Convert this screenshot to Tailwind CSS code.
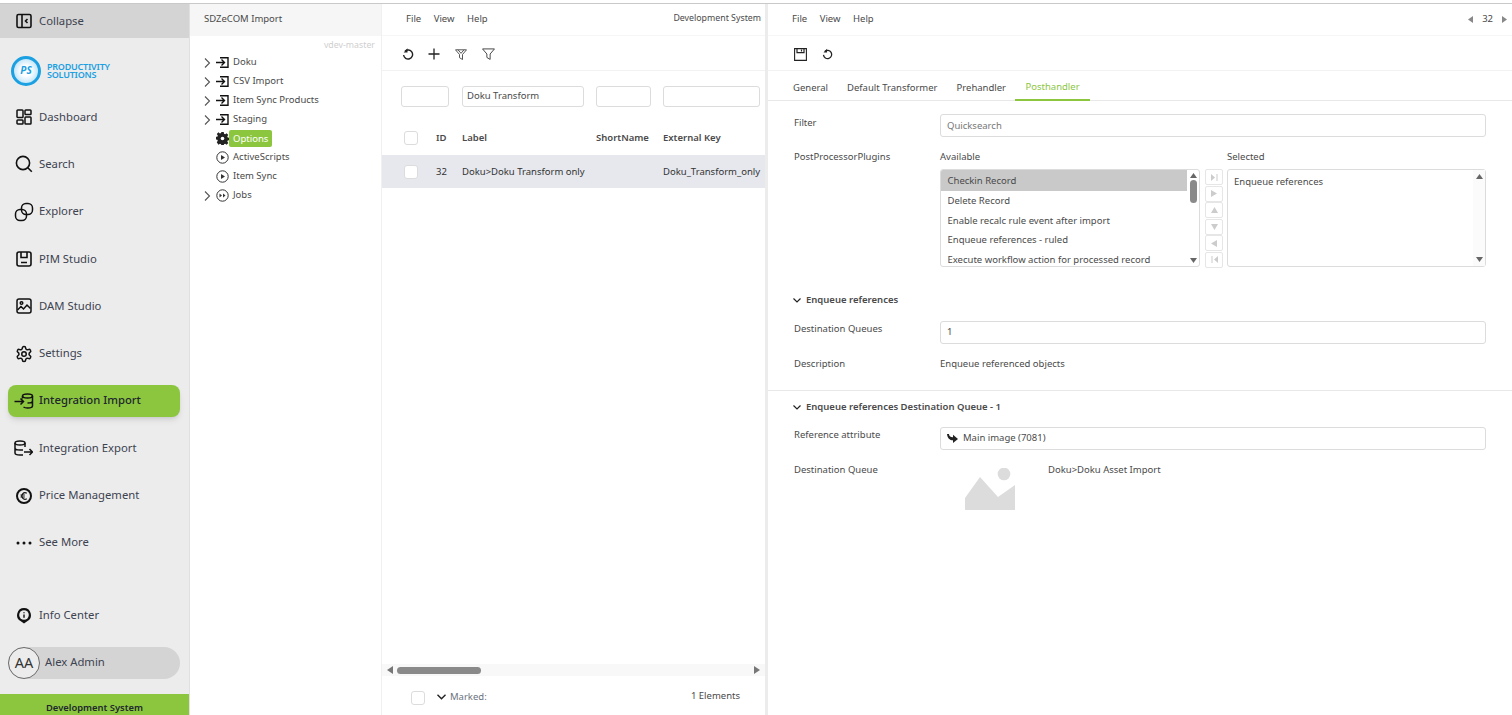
<!DOCTYPE html>
<html><head><meta charset="utf-8"><script src="https://cdn.jsdelivr.net/npm/@tailwindcss/browser@4"></script></head>
<body class="m-0 bg-white">
<div class="w-[1512px] h-[715px] overflow-hidden flex flex-col font-['Noto_Sans','Open_Sans',sans-serif] text-[#4a4a4a]">
<div class="h-[3px] bg-white shrink-0"></div>
<div class="h-px bg-[#c9c9c9] shrink-0"></div>
<div class="flex flex-1 min-h-0">

<!-- Sidebar -->
<aside class="w-[189px] shrink-0 bg-[#ececec] flex flex-col text-[11.3px] text-[#3d4350]">
  <div class="h-[34px] bg-[#d4d4d4] flex items-center pl-[16px] gap-[7px] shrink-0">
    <svg class="w-[16px] h-[16px]" viewBox="0 0 16 16" fill="none" stroke="#111" stroke-width="1.6"><rect x="1" y="1.5" width="14" height="13" rx="1.5"/><path d="M6 1.5v13M11.5 6l-2 2 2 2"/></svg>
    <span>Collapse</span>
  </div>
  <div class="h-[55.5px] flex items-center pl-[11px] pt-[10px] gap-[6px] shrink-0">
    <div class="w-[30px] h-[30px] rounded-full bg-[radial-gradient(circle,#ffffff_30%,#bfe4f8_75%)] border-[3px] border-[#1ba0e2] flex items-center justify-center text-[10px] italic font-bold text-[#1ba0e2]">PS</div>
    <div class="text-[#1ba0e2] text-[9px] font-semibold leading-[8px] tracking-tight"><div>PRODUCTIVITY</div><div>SOLUTIONS</div></div>
  </div>
  <div class="flex flex-col">
    <div class="h-[47.3px] flex items-center pl-[16px] gap-[7px]"><svg class="w-[16px] h-[16px]" viewBox="0 0 16 16" fill="none" stroke="#111" stroke-width="1.5"><rect x="1" y="1" width="6" height="7.5" rx=".8"/><rect x="9" y="1" width="6" height="4.5" rx=".8"/><rect x="1" y="11" width="6" height="4" rx=".8"/><rect x="9" y="8" width="6" height="7" rx=".8"/></svg><span>Dashboard</span></div>
    <div class="h-[47.3px] flex items-center pl-[16px] gap-[7px]"><svg class="w-[16px] h-[16px] overflow-visible" viewBox="0 0 16 16" fill="none" stroke="#111" stroke-width="1.6"><circle cx="7" cy="7" r="6.6"/><path d="M11.800 11.800l4 4"/></svg><span>Search</span></div>
    <div class="h-[47.3px] flex items-center pl-[16px] gap-[7px]"><svg class="w-[16px] h-[16px] overflow-visible" viewBox="0 0 16 16" fill="none" stroke="#111" stroke-width="1.5"><rect x="5.500" y="-.5" width="11" height="11" rx="4.500"/><rect x="-.5" y="5.500" width="11" height="11" rx="4.500"/></svg><span>Explorer</span></div>
    <div class="h-[47.3px] flex items-center pl-[16px] gap-[7px]"><svg class="w-[16px] h-[16px]" viewBox="0 0 16 16" fill="none" stroke="#111" stroke-width="1.6"><rect x="1" y="1" width="14" height="14" rx="2"/><path d="M5 1v5.500h6V1M5 11.500h6"/></svg><span>PIM Studio</span></div>
    <div class="h-[47.3px] flex items-center pl-[16px] gap-[7px]"><svg class="w-[16px] h-[16px]" viewBox="0 0 16 16" fill="none" stroke="#111" stroke-width="1.5"><rect x="1" y="1" width="14" height="14" rx="2"/><circle cx="5.500" cy="5" r="1.300"/><path d="M1.500 12l3.500-3.500 2.500 2.500 3.500-4 3.500 3.500"/></svg><span>DAM Studio</span></div>
    <div class="h-[47.3px] flex items-center pl-[15px] gap-[6px]"><svg class="w-[18px] h-[18px]" viewBox="0 0 24 24" fill="none" stroke="#111" stroke-width="2"><path d="M12.200 2h-.4a2 2 0 0 0-2 2v.2a2 2 0 0 1-1 1.700l-.4.3a2 2 0 0 1-2 0l-.2-.1a2 2 0 0 0-2.700.7l-.2.4a2 2 0 0 0 .7 2.700l.2.1a2 2 0 0 1 1 1.700v.5a2 2 0 0 1-1 1.800l-.2.1a2 2 0 0 0-.7 2.700l.2.4a2 2 0 0 0 2.700.7l.2-.1a2 2 0 0 1 2 0l.4.3a2 2 0 0 1 1 1.700v.2a2 2 0 0 0 2 2h.4a2 2 0 0 0 2-2v-.2a2 2 0 0 1 1-1.700l.4-.3a2 2 0 0 1 2 0l.2.1a2 2 0 0 0 2.700-.7l.2-.4a2 2 0 0 0-.7-2.700l-.2-.1a2 2 0 0 1-1-1.800v-.5a2 2 0 0 1 1-1.700l.2-.1a2 2 0 0 0 .7-2.700l-.2-.4a2 2 0 0 0-2.700-.7l-.2.1a2 2 0 0 1-2 0l-.4-.3a2 2 0 0 1-1-1.700V4a2 2 0 0 0-2-2z"/><circle cx="12" cy="12" r="3"/></svg><span>Settings</span></div>
    <div class="h-[47.3px] flex items-center pl-[8px] pr-[9px]"><div class="flex-1 h-[32px] bg-[#8cc63f] rounded-[8px] shadow-md flex items-center pl-[6px] gap-[5px] font-medium text-[#20262e]"><svg class="w-[20px] h-[16px]" viewBox="0 0 20 16" fill="none" stroke="#111" stroke-width="1.500"><ellipse cx="13.500" cy="3" rx="5" ry="2"/><path d="M8.500 3v2.500M18.500 3v10c0 1.200-2.200 2-5 2-1.500 0-3-.3-4-1M18.500 8c0 1.200-2.200 2-5 2M.5 8.500h9M6.500 5.500l3 3-3 3"/></svg><span>Integration Import</span></div></div>
    <div class="h-[47.3px] flex items-center pl-[14px] gap-[6px]"><svg class="w-[19px] h-[16px]" viewBox="0 0 19 16" fill="none" stroke="#111" stroke-width="1.500"><ellipse cx="6" cy="3" rx="5" ry="2"/><path d="M1 3v10c0 1.200 2.200 2 5 2h3M1 8c0 1.200 2.200 2 5 2h3M11 3v4M10 12h8.500M15.500 9l3 3-3 3"/></svg><span>Integration Export</span></div>
    <div class="h-[47.3px] flex items-center pl-[16px] gap-[7px]"><svg class="w-[16px] h-[16px]" viewBox="0 0 16 16" fill="none" stroke="#111"><circle cx="8" cy="8" r="7" stroke-width="2"/><path d="M10.800 5.300a3.200 3.200 0 1 0 0 5.400M4.500 7h4.300M4.500 9h4.300" stroke-width="1.200"/></svg><span>Price Management</span></div>
    <div class="h-[47.3px] flex items-center pl-[16px] gap-[7px]"><svg class="w-[16px] h-[16px]" viewBox="0 0 16 16" fill="#111"><circle cx="2" cy="8" r="1.500"/><circle cx="8" cy="8" r="1.500"/><circle cx="14" cy="8" r="1.500"/></svg><span>See More</span></div>
  </div>
  <div class="flex-1"></div>
  <div class="h-[47px] flex items-center pl-[16px] gap-[7px]"><svg class="w-[16px] h-[17px]" viewBox="0 0 16 17" fill="none"><path d="M8 1a7 7 0 0 1 3.500 13L8 16.500 4.500 14A7 7 0 0 1 8 1z" fill="#111"/><circle cx="8" cy="8" r="4.800" fill="#ececec"/><path d="M8 7.500v3.200M8 5.200v1" stroke="#111" stroke-width="1.400"/></svg><span>Info Center</span></div>
  <div class="h-[47px] flex items-center pl-[8px] pr-[9px]"><div class="flex-1 h-[32px] bg-[#d4d4d4] rounded-full flex items-center"><div class="w-[32px] h-[32px] rounded-full border border-[#6b6b6b] bg-[#ececec] flex items-center justify-center text-[14.5px] text-[#333]">AA</div><span class="ml-[5px]">Alex Admin</span></div></div>
  <div class="h-[21px] mt-[8px] bg-[#8cc63f] flex items-center justify-center pt-[7px] text-[9.4px] font-semibold text-[#20262e] shrink-0">Development System</div>
</aside>

<!-- Tree -->
<section class="w-[192px] shrink-0 flex flex-col text-[9.5px] text-[#4a4a4a] border-l border-[#e0e0e0]">
  <div class="h-[32px] bg-[#f6f6f6] flex items-center pl-[14px] pb-[2px] shrink-0">SDZeCOM Import</div>
  <div class="h-[17px] flex items-center justify-end pr-[6px] text-[8.8px] text-[#cfcfcf] pt-[3px]">vdev-master</div>
  <div class="flex flex-col">
    <div class="h-[19px] flex items-center pl-[14px]"><svg class="w-[7px] h-[10px] mr-[5px]" viewBox="0 0 7 10" fill="none" stroke="#555" stroke-width="1.100"><path d="M1 .5L5.500 5 1 9.500"/></svg><svg class="w-[13px] h-[11px] mr-[4px]" viewBox="0 0 13 11" fill="none" stroke="#111" stroke-width="1.400"><path d="M0 5.500h8M5.500 2.500l3 3-3 3M4 .7h8v9.600H4"/></svg><span>Doku</span></div>
    <div class="h-[19px] flex items-center pl-[14px]"><svg class="w-[7px] h-[10px] mr-[5px]" viewBox="0 0 7 10" fill="none" stroke="#555" stroke-width="1.100"><path d="M1 .5L5.500 5 1 9.500"/></svg><svg class="w-[13px] h-[11px] mr-[4px]" viewBox="0 0 13 11" fill="none" stroke="#111" stroke-width="1.400"><path d="M0 5.500h8M5.500 2.500l3 3-3 3M4 .7h8v9.600H4"/></svg><span>CSV Import</span></div>
    <div class="h-[19px] flex items-center pl-[14px]"><svg class="w-[7px] h-[10px] mr-[5px]" viewBox="0 0 7 10" fill="none" stroke="#555" stroke-width="1.100"><path d="M1 .5L5.500 5 1 9.500"/></svg><svg class="w-[13px] h-[11px] mr-[4px]" viewBox="0 0 13 11" fill="none" stroke="#111" stroke-width="1.400"><path d="M0 5.500h8M5.500 2.500l3 3-3 3M4 .7h8v9.600H4"/></svg><span>Item Sync Products</span></div>
    <div class="h-[19px] flex items-center pl-[14px]"><svg class="w-[7px] h-[10px] mr-[5px]" viewBox="0 0 7 10" fill="none" stroke="#555" stroke-width="1.100"><path d="M1 .5L5.500 5 1 9.500"/></svg><svg class="w-[13px] h-[11px] mr-[4px]" viewBox="0 0 13 11" fill="none" stroke="#111" stroke-width="1.400"><path d="M0 5.500h8M5.500 2.500l3 3-3 3M4 .7h8v9.600H4"/></svg><span>Staging</span></div>
    <div class="h-[19px] flex items-center pl-[26px]"><svg class="w-[13px] h-[13px]" viewBox="0 0 13 13" fill="#222"><path d="M5.200 0h2.600l.3 1.900 1.200.5 1.600-1.100 1.800 1.800-1.100 1.600.5 1.200 1.900.3v2.600l-1.900.3-.5 1.200 1.100 1.600-1.800 1.800-1.600-1.100-1.200.5-.3 1.900H5.200l-.3-1.900-1.200-.5-1.600 1.100L.3 11l1.100-1.600-.5-1.200L-1 7.900V5.300l1.900-.3.5-1.200L.3 2.200l1.800-1.800 1.600 1.100 1.200-.5z" transform="translate(.5 0) scale(.93)"/><circle cx="6.500" cy="6.500" r="1.800" fill="#fff"/></svg><span class="bg-[#8cc63f] text-white rounded-[2px] px-[4px] h-[17px] leading-[17px]">Options</span></div>
    <div class="h-[19px] flex items-center pl-[26px] gap-[4px]"><svg class="w-[13px] h-[13px]" viewBox="0 0 13 13" fill="none" stroke="#333"><circle cx="6.500" cy="6.500" r="5.700"/><path d="M5 4l4 2.500L5 9z" fill="#333" stroke="none"/></svg><span>ActiveScripts</span></div>
    <div class="h-[19px] flex items-center pl-[26px] gap-[4px]"><svg class="w-[13px] h-[13px]" viewBox="0 0 13 13" fill="none" stroke="#333"><circle cx="6.500" cy="6.500" r="5.700"/><path d="M5 4l4 2.500L5 9z" fill="#333" stroke="none"/></svg><span>Item Sync</span></div>
    <div class="h-[19px] flex items-center pl-[14px]"><svg class="w-[7px] h-[10px] mr-[5px]" viewBox="0 0 7 10" fill="none" stroke="#555" stroke-width="1.100"><path d="M1 .5L5.500 5 1 9.500"/></svg><svg class="w-[13px] h-[13px] mr-[4px]" viewBox="0 0 13 13" fill="none" stroke="#333"><circle cx="6.500" cy="6.500" r="5.700"/><path d="M3.500 4.500l2.500 2-2.500 2zM7 4.500l2.500 2-2.500 2z" fill="#333" stroke="none"/></svg><span>Jobs</span></div>
  </div>
</section>

<!-- List -->
<section class="w-[384px] shrink-0 flex flex-col text-[9.5px] border-l border-[#f0f0f0] relative">
  <div class="h-[32px] flex items-center pl-[24px] pr-[4px] pb-[1px] gap-[12.5px] border-b border-[#f6f6f6] shrink-0"><span>File</span><span>View</span><span>Help</span><span class="ml-auto text-[8.8px]">Development System</span></div>
  <div class="h-[35px] flex items-center pl-[20px] pt-[2px] border-b border-[#f2f2f2] shrink-0">
    <svg class="w-[12px] h-[12px]" viewBox="0 0 12 12" fill="none" stroke="#222" stroke-width="1.400"><path d="M3 3.200A4.500 4.500 0 1 1 1.600 7"/><path d="M5.500 .2v4.200H1.700" stroke="none" fill="#222"/></svg>
    <svg class="w-[12px] h-[12px] ml-[14px]" viewBox="0 0 12 12" fill="none" stroke="#222" stroke-width="1.300"><path d="M6 .5v11M.5 6h11"/></svg>
    <svg class="w-[12px] h-[11px] ml-[15px]" viewBox="0 0 12 11" fill="none" stroke="#444" stroke-width=".9"><path d="M.5 .8h11L7.500 5.500v5l-3-1.800V5.500zM3 .8l3 3.500 3-3.500"/></svg>
    <svg class="w-[13px] h-[12px] ml-[15px]" viewBox="0 0 12 11" fill="none" stroke="#444" stroke-width=".9"><path d="M.5 .8h11L7.500 5.500v5l-3-1.800V5.500z"/></svg>
  </div>
  <div class="h-[50px] flex items-center pl-[19px] shrink-0">
    <div class="w-[48px] h-[21px] border border-[#dcdcdc] rounded-[3px]"></div>
    <div class="w-[122px] h-[21px] ml-[13px] border border-[#dcdcdc] rounded-[3px] flex items-center pl-[4px] pt-[1px]">Doku Transform</div>
    <div class="w-[55px] h-[21px] ml-[12px] border border-[#dcdcdc] rounded-[3px]"></div>
    <div class="w-[97px] h-[21px] ml-[12px] border border-[#dcdcdc] rounded-[3px]"></div>
  </div>
  <div class="h-[33px] flex items-center pl-[22px] font-semibold text-[#4a4a4a] shrink-0 [&>span]:pt-[1px]">
    <div class="w-[14px] h-[14px] border border-[#dcdcdc] rounded-[3px] bg-white"></div>
    <span class="w-[26px] ml-[18px]">ID</span><span class="w-[134px]">Label</span><span class="w-[67px] whitespace-nowrap">ShortName</span><span>External Key</span>
  </div>
  <div class="h-[33px] mt-px bg-[#e6e8ed] flex items-center pl-[22px] text-[#333] shrink-0 [&>span]:pt-[1px]">
    <div class="w-[14px] h-[14px] border border-[#dcdcdc] rounded-[3px] bg-white"></div>
    <span class="w-[26px] ml-[18px]">32</span><span class="w-[201px]">Doku&gt;Doku Transform only</span><span>Doku_Transform_only</span>
  </div>
  <div class="flex-1"></div>
  <div class="h-[12px] bg-[#f8f8f8] flex items-center px-[5px] shrink-0 mb-[9px]">
    <svg class="w-[6px] h-[8px]" viewBox="0 0 6 8" fill="#777"><path d="M6 0v8L0 4z"/></svg>
    <div class="w-[84px] h-[7px] bg-[#8a8a8a] rounded-full ml-[4px]"></div>
    <svg class="w-[6px] h-[8px] ml-auto" viewBox="0 0 6 8" fill="#777"><path d="M0 0v8l6-4z"/></svg>
  </div>
  <div class="h-[23px] flex items-center pl-[29px] pr-[25px] shrink-0 mb-[7px]">
    <div class="w-[14px] h-[14px] mt-[2px] border border-[#dcdcdc] rounded-[3px] bg-white"></div>
    <svg class="w-[9px] h-[6px] ml-[12px]" viewBox="0 0 9 6" fill="none" stroke="#222" stroke-width="1.400"><path d="M.5 .7L4.500 4.700 8.500 .7"/></svg>
    <span class="ml-[4px] mt-[1px] text-[#6b7280]">Marked:</span>
    <span class="ml-auto -mt-[1px]">1 Elements</span>
  </div>
</section>

<div class="w-[3px] shrink-0 bg-[#ececec]"></div>

<!-- Detail -->
<section class="flex-1 min-w-0 flex flex-col text-[9.5px]">
  <div class="h-[32px] flex items-center pl-[24px] pr-[5px] pb-[1px] gap-[12.5px] border-b border-[#f6f6f6] shrink-0"><span>File</span><span>View</span><span>Help</span>
    <div class="ml-auto flex items-center gap-[9px]"><svg class="w-[5px] h-[7px]" viewBox="0 0 5 7" fill="#888"><path d="M5 0v7L0 3.500z"/></svg><span>32</span><svg class="w-[5px] h-[7px]" viewBox="0 0 5 7" fill="#888"><path d="M0 0v7l5-3.500z"/></svg></div>
  </div>
  <div class="h-[35px] flex items-center pl-[26px] pt-[2px] gap-[15px] border-b border-[#f2f2f2] shrink-0">
    <svg class="w-[13px] h-[13px]" viewBox="0 0 13 13" fill="none" stroke="#222" stroke-width="1.100"><path d="M.6 .6h11.800v11.800H.6z"/><path d="M3 .6v4h7v-4" stroke-width="1.200"/><path d="M7.500 1.500v2" stroke-width="1.200"/></svg>
    <svg class="w-[11px] h-[12px]" viewBox="0 0 12 12" fill="none" stroke="#222" stroke-width="1.400"><path d="M3 3.200A4.500 4.500 0 1 1 1.600 7"/><path d="M5.500 .2v4.200H1.700" stroke="none" fill="#222"/></svg>
  </div>
  <div class="h-[30px] flex items-center border-b border-[#e8e8e8] shrink-0">
    <div class="h-[29px] flex items-center pt-[6px] ml-[25px]">General</div>
    <div class="h-[29px] flex items-center pt-[6px] ml-[19px]">Default Transformer</div>
    <div class="h-[29px] flex items-center pt-[6px] ml-[19px]">Prehandler</div>
    <div class="h-[30px] w-[75px] ml-[9px] flex items-center justify-center pt-[6px] text-[#8cc63f] border-b-2 border-[#8cc63f]">Posthandler</div>
  </div>

  <div class="flex-1 min-h-0 flex flex-col">
    <div class="flex pl-[26px] pr-[26px] pt-[13px] h-[49px] shrink-0">
      <span class="w-[146px] pt-[2px]">Filter</span>
      <div class="flex-1 h-[23px] border border-[#dcdcdc] rounded-[3px] flex items-center pl-[6px] pt-[1px] text-[#777]">Quicksearch</div>
    </div>
    <div class="flex pl-[26px] pr-[26px] shrink-0">
      <span class="w-[146px]">PostProcessorPlugins</span>
      <div class="flex-1 flex flex-col">
        <div class="flex h-[19px]"><span class="w-[287px]">Available</span><span>Selected</span></div>
        <div class="flex">
          <div class="w-[260px] h-[98px] border border-[#dcdcdc] rounded-[3px] flex overflow-hidden">
            <div class="flex-1 flex flex-col overflow-hidden">
              <div class="h-[21px] bg-[#c9c9c9] flex items-center pl-[6.5px] pt-[1px] shrink-0">Checkin Record</div>
              <div class="h-[20px] flex items-center pl-[6.5px] shrink-0">Delete Record</div>
              <div class="h-[20px] flex items-center pl-[6.5px] shrink-0">Enable recalc rule event after import</div>
              <div class="h-[19px] flex items-center pl-[6.5px] shrink-0">Enqueue references - ruled</div>
              <div class="h-[20px] flex items-center pl-[6.5px] shrink-0 whitespace-nowrap">Execute workflow action for processed record</div>
            </div>
            <div class="w-[12px] flex flex-col items-center justify-between py-[3px]">
              <div class="flex flex-col items-center gap-[2px]"><svg class="w-[7px] h-[5px]" viewBox="0 0 7 5" fill="#666"><path d="M0 5h7L3.500 0z"/></svg><div class="w-[7px] h-[23px] bg-[#8a8a8a] rounded-full"></div></div>
              <svg class="w-[7px] h-[5px]" viewBox="0 0 7 5" fill="#666"><path d="M0 0h7L3.500 5z"/></svg>
            </div>
          </div>
          <div class="w-[18px] ml-[5px] flex flex-col gap-[0.5px]">
            <div class="h-[16px] border border-[#e6e6e6] rounded-[2px] flex items-center justify-center text-[#ccc]"><svg class="w-[7px] h-[7px]" viewBox="0 0 7 7" fill="#ccc"><path d="M0 0v7l4-3.500zM5.500 0h1v7h-1z"/></svg></div>
            <div class="h-[16px] border border-[#e6e6e6] rounded-[2px] flex items-center justify-center"><svg class="w-[6px] h-[7px]" viewBox="0 0 6 7" fill="#ccc"><path d="M0 0v7l6-3.500z"/></svg></div>
            <div class="h-[16px] border border-[#e6e6e6] rounded-[2px] flex items-center justify-center"><svg class="w-[7px] h-[6px]" viewBox="0 0 7 6" fill="#ccc"><path d="M0 6h7L3.500 0z"/></svg></div>
            <div class="h-[16px] border border-[#e6e6e6] rounded-[2px] flex items-center justify-center"><svg class="w-[7px] h-[6px]" viewBox="0 0 7 6" fill="#ccc"><path d="M0 0h7L3.500 6z"/></svg></div>
            <div class="h-[16px] border border-[#e6e6e6] rounded-[2px] flex items-center justify-center"><svg class="w-[6px] h-[7px]" viewBox="0 0 6 7" fill="#ccc"><path d="M6 0v7L0 3.500z"/></svg></div>
            <div class="h-[16px] border border-[#e6e6e6] rounded-[2px] flex items-center justify-center"><svg class="w-[7px] h-[7px]" viewBox="0 0 7 7" fill="#ccc"><path d="M7 0v7L3 3.500zM.5 0h1v7h-1z"/></svg></div>
          </div>
          <div class="flex-1 h-[98px] ml-[4px] border border-[#dcdcdc] rounded-[3px] flex">
            <div class="flex-1 pl-[6px] pt-[5px]">Enqueue references</div>
            <div class="w-[12px] flex flex-col items-center justify-between py-[4px] bg-[#fbfbfb]"><svg class="w-[7px] h-[5px]" viewBox="0 0 7 5" fill="#666"><path d="M0 5h7L3.500 0z"/></svg><svg class="w-[7px] h-[5px]" viewBox="0 0 7 5" fill="#666"><path d="M0 0h7L3.500 5z"/></svg></div>
          </div>
        </div>
      </div>
    </div>
    <div class="h-[123px] border-b border-[#e8e8e8] shrink-0 pl-[26px] pr-[26px]">
      <div class="h-[16px] mt-[25px] flex items-center font-semibold gap-[5px]"><svg class="w-[8px] h-[5px] -ml-px" viewBox="0 0 8 5" fill="none" stroke="#222" stroke-width="1.200"><path d="M.5 .5L4 4 7.500 .5"/></svg><span>Enqueue references</span></div>
      <div class="flex mt-[12px]"><span class="w-[146px] pt-[1px]">Destination Queues</span><div class="flex-1 h-[23px] border border-[#dcdcdc] rounded-[3px] flex items-center pl-[6px]">1</div></div>
      <div class="flex mt-[13px]"><span class="w-[146px]">Description</span><span>Enqueue referenced objects</span></div>
    </div>
    <div class="pl-[26px] pr-[26px] shrink-0">
      <div class="h-[16px] mt-[9px] flex items-center font-semibold gap-[5px]"><svg class="w-[8px] h-[5px] -ml-px" viewBox="0 0 8 5" fill="none" stroke="#222" stroke-width="1.200"><path d="M.5 .5L4 4 7.500 .5"/></svg><span>Enqueue references Destination Queue - 1</span></div>
      <div class="flex mt-[11px]"><span class="w-[146px] pt-[1px]">Reference attribute</span><div class="flex-1 h-[23px] border border-[#dcdcdc] rounded-[3px] flex items-center pl-[6px] gap-[5px]"><svg class="w-[11px] h-[9px]" viewBox="0 0 11 9" fill="#222"><path d="M0 0h2c0 2 1 3.200 4 3.200V.8L11 5 6 9V6.300C2.500 6.300 .5 4 0 0z"/></svg><span>Main image (7081)</span></div></div>
      <div class="flex mt-[13px]"><span class="w-[146px]">Destination Queue</span>
        <svg class="w-[50px] h-[42px] mt-[5px] ml-[25px]" viewBox="0 0 50 42" fill="#dcdcdc"><circle cx="39" cy="6" r="6.300"/><path d="M0 42V30L15 9l18 20 17-12v25z"/></svg>
        <span class="ml-[33px]">Doku&gt;Doku Asset Import</span>
      </div>
    </div>
  </div>
</section>
</div>
</div>
</body></html>
